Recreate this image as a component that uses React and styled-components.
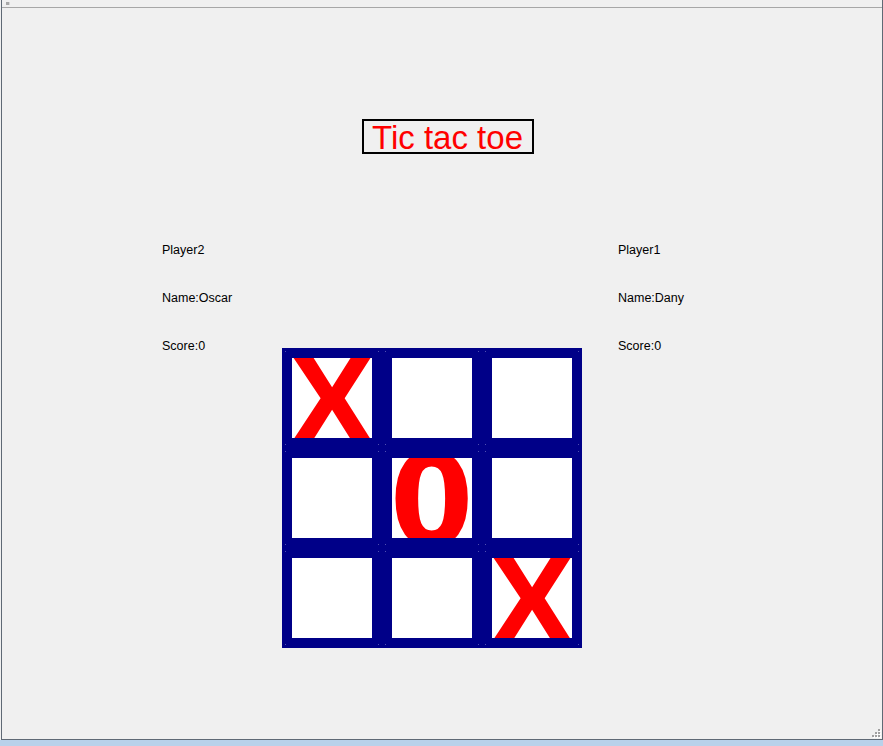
import styled, { createGlobalStyle } from "styled-components";

const GlobalStyle = createGlobalStyle`
  html, body {
    margin: 0;
    padding: 0;
    background: #f0f0f0;
    font-family: "Liberation Sans", Arial, sans-serif;
  }
`;

const Page = styled.div`
  width: 883px;
  height: 746px;
  display: flex;
  flex-direction: column;
  background: #f0f0f0;
  overflow: hidden;
`;

const Frame = styled.div`
  position: relative;
  height: 739px;
  flex-shrink: 0;
  margin-left: 1px;
  border-left: 1px solid #5f6975;
  border-right: 1px solid #5f6975;
  border-bottom: 1px solid #5f6975;
  background: #f0f0f0;
  display: flex;
  flex-direction: column;
`;

const BottomBar = styled.div`
  flex: 1;
  background: #b9d1ea;
`;

const MenuStrip = styled.div`
  height: 5px;
  border-bottom: 1px solid #a7a7a7;
  display: flex;
  align-items: flex-start;
  padding: 2px 0 0 4px;
`;

const MenuGlyph = styled.span`
  width: 3px;
  height: 3px;
  background: #a8a8a8;
  border-right: 1px solid #d6d6d6;
`;

const Content = styled.div`
  flex: 1;
  padding-top: 111px;
  display: flex;
  flex-direction: column;
`;

const TitleRow = styled.div`
  padding-left: 360px;
  display: flex;
`;

const Title = styled.h1`
  margin: 0;
  border: 2px solid #000;
  padding: 2px 9px 0 8px;
  font-family: "Liberation Sans", Arial, sans-serif;
  font-weight: normal;
  font-size: 33px;
  line-height: 29px;
  color: #ff0000;
`;

const GameRow = styled.div`
  margin-top: 72px;
  display: flex;
  align-items: flex-start;
`;

const PlayerInfo = styled.div`
  width: 120px;
  margin-left: ${(p) => p.$offset}px;
  display: flex;
  flex-direction: column;
`;

const InfoLine = styled.div`
  font-size: 12.5px;
  line-height: 48px;
  color: #000;
  white-space: nowrap;
`;

const Board = styled.div`
  margin-top: 122px;
  width: 300px;
  height: 300px;
  display: grid;
  grid-template-columns: repeat(3, 100px);
  grid-template-rows: repeat(3, 100px);
`;

const dot = "linear-gradient(#5050b0, #5050b0)";

const Cell = styled.div`
  padding: 10px;
  box-sizing: border-box;
  background: ${dot} 3px 3px / 1px 1px no-repeat,
    ${dot} 96px 3px / 1px 1px no-repeat, ${dot} 3px 96px / 1px 1px no-repeat,
    ${dot} 96px 96px / 1px 1px no-repeat, #000088;
`;

const Square = styled.div`
  width: 80px;
  height: 80px;
  background: #fff;
  overflow: hidden;
  display: flex;
  align-items: center;
  justify-content: center;
`;

const Mark = styled.span`
  font-family: ${(p) =>
    p.$kind === "O"
      ? `"DejaVu Sans", Verdana, sans-serif`
      : `"Liberation Sans", Arial, sans-serif`};
  font-weight: bold;
  font-size: ${(p) => (p.$kind === "O" ? 128 : 132)}px;
  line-height: 1;
  color: #ff0000;
  transform: ${(p) =>
    p.$kind === "O" ? "translateY(3px) scaleX(0.94)" : "translateY(3px)"};
`;

const Grip = styled.svg`
  position: absolute;
  right: 1px;
  bottom: 1px;
`;

const board = ["X", "", "", "", "O", "", "", "", "X"];

const SizeGrip = () => (
  <Grip width="10" height="10" viewBox="0 0 10 10">
    {[
      [7, 1],
      [4, 4],
      [7, 4],
      [1, 7],
      [4, 7],
      [7, 7],
    ].map(([x, y]) => (
      <g key={`${x}-${y}`}>
        <rect x={x + 1} y={y + 1} width="2" height="2" fill="#ffffff" />
        <rect x={x} y={y} width="2" height="2" fill="#a0a0a0" />
      </g>
    ))}
  </Grip>
);

const App = () => {
  return (
    <Page>
      <GlobalStyle />
      <Frame>
        <MenuStrip>
          <MenuGlyph />
        </MenuStrip>
        <Content>
          <TitleRow>
            <Title>Tic tac toe</Title>
          </TitleRow>
          <GameRow>
            <PlayerInfo $offset={160}>
              <InfoLine>Player2</InfoLine>
              <InfoLine>Name:Oscar</InfoLine>
              <InfoLine>Score:0</InfoLine>
            </PlayerInfo>
            <Board>
              {board.map((m, i) => (
                <Cell key={i}>
                  <Square>{m && <Mark $kind={m}>{m === "O" ? "0" : "X"}</Mark>}</Square>
                </Cell>
              ))}
            </Board>
            <PlayerInfo $offset={36}>
              <InfoLine>Player1</InfoLine>
              <InfoLine>Name:Dany</InfoLine>
              <InfoLine>Score:0</InfoLine>
            </PlayerInfo>
          </GameRow>
        </Content>
        <SizeGrip />
      </Frame>
      <BottomBar />
    </Page>
  );
};

export default App;
